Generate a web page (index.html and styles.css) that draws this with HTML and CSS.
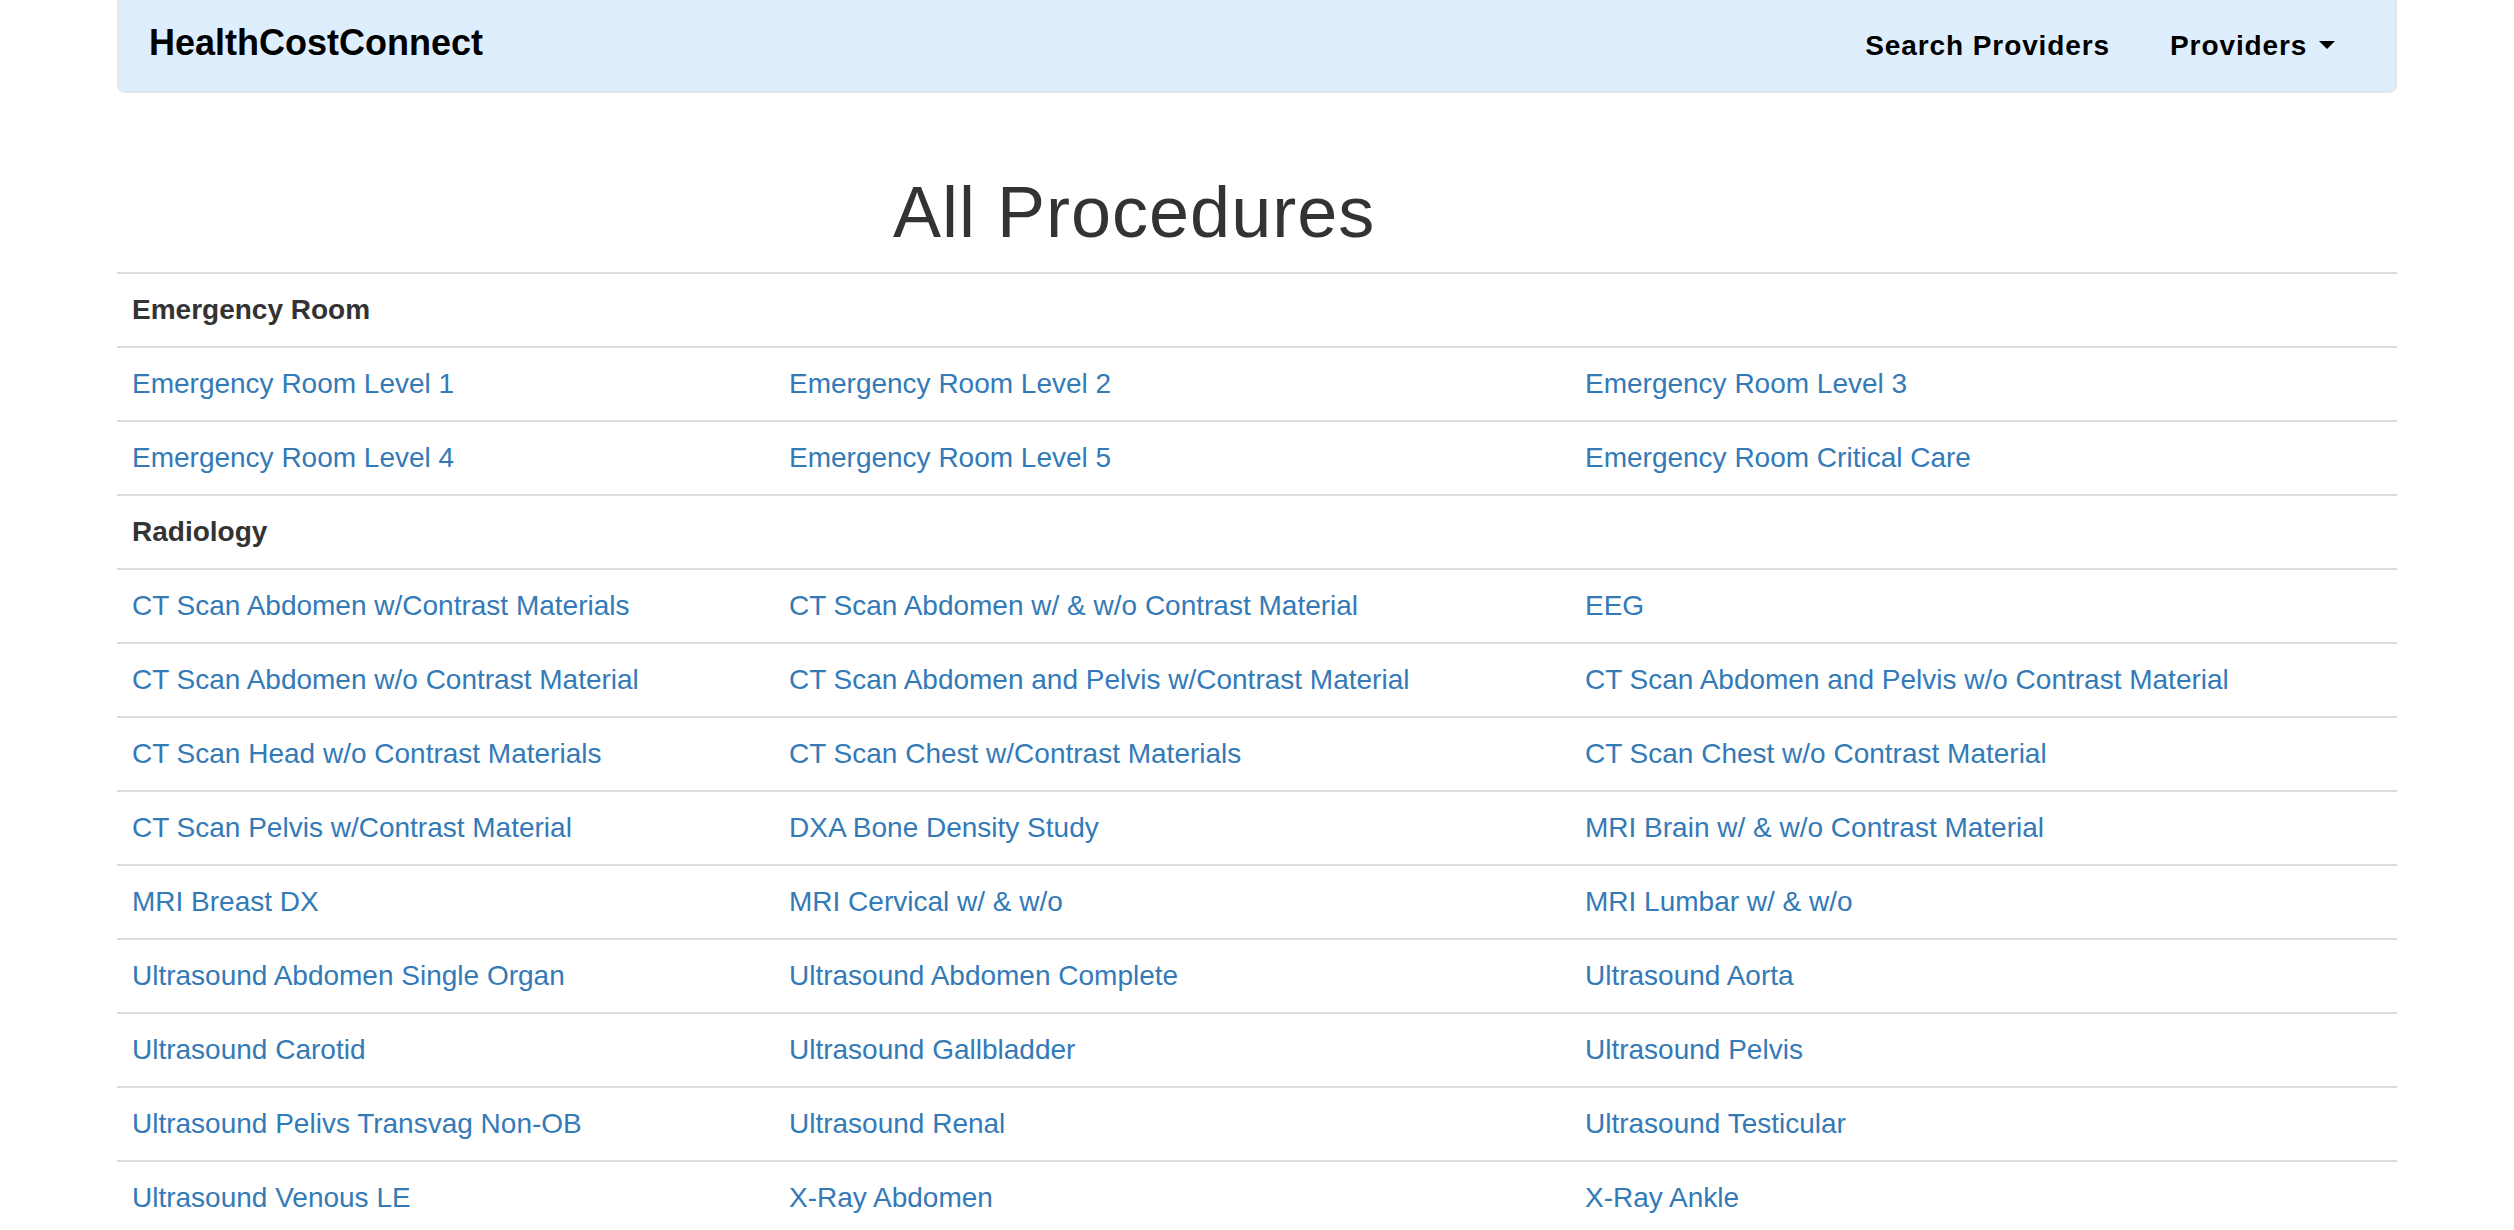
FILE: index.html
```html
<!DOCTYPE html>
<html lang="en">
<head>
<meta charset="utf-8">
<title>HealthCostConnect - All Procedures</title>
<link rel="stylesheet" href="styles.css">
</head>
<body>
<div class="container">
  <nav class="navbar">
    <a class="brand" href="#">HealthCostConnect</a>
    <ul class="nav">
      <li><a href="#">Search Providers</a></li>
      <li><a href="#">Providers <span class="caret"></span></a></li>
    </ul>
  </nav>

  <h1 class="title">All Procedures</h1>

  <table class="procedures">
    <colgroup>
      <col class="c1"><col class="c2"><col class="c3">
    </colgroup>
    <tbody>
      <tr><th colspan="3">Emergency Room</th></tr>
      <tr><td><a href="#">Emergency Room Level 1</a></td><td><a href="#">Emergency Room Level 2</a></td><td><a href="#">Emergency Room Level 3</a></td></tr>
      <tr><td><a href="#">Emergency Room Level 4</a></td><td><a href="#">Emergency Room Level 5</a></td><td><a href="#">Emergency Room Critical Care</a></td></tr>
      <tr><th colspan="3">Radiology</th></tr>
      <tr><td><a href="#">CT Scan Abdomen w/Contrast Materials</a></td><td><a href="#">CT Scan Abdomen w/ &amp; w/o Contrast Material</a></td><td><a href="#">EEG</a></td></tr>
      <tr><td><a href="#">CT Scan Abdomen w/o Contrast Material</a></td><td><a href="#">CT Scan Abdomen and Pelvis w/Contrast Material</a></td><td><a href="#">CT Scan Abdomen and Pelvis w/o Contrast Material</a></td></tr>
      <tr><td><a href="#">CT Scan Head w/o Contrast Materials</a></td><td><a href="#">CT Scan Chest w/Contrast Materials</a></td><td><a href="#">CT Scan Chest w/o Contrast Material</a></td></tr>
      <tr><td><a href="#">CT Scan Pelvis w/Contrast Material</a></td><td><a href="#">DXA Bone Density Study</a></td><td><a href="#">MRI Brain w/ &amp; w/o Contrast Material</a></td></tr>
      <tr><td><a href="#">MRI Breast DX</a></td><td><a href="#">MRI Cervical w/ &amp; w/o</a></td><td><a href="#">MRI Lumbar w/ &amp; w/o</a></td></tr>
      <tr><td><a href="#">Ultrasound Abdomen Single Organ</a></td><td><a href="#">Ultrasound Abdomen Complete</a></td><td><a href="#">Ultrasound Aorta</a></td></tr>
      <tr><td><a href="#">Ultrasound Carotid</a></td><td><a href="#">Ultrasound Gallbladder</a></td><td><a href="#">Ultrasound Pelvis</a></td></tr>
      <tr><td><a href="#">Ultrasound Pelivs Transvag Non-OB</a></td><td><a href="#">Ultrasound Renal</a></td><td><a href="#">Ultrasound Testicular</a></td></tr>
      <tr><td><a href="#">Ultrasound Venous LE</a></td><td><a href="#">X-Ray Abdomen</a></td><td><a href="#">X-Ray Ankle</a></td></tr>
    </tbody>
  </table>
</div>
</body>
</html>
```

FILE: styles.css
```css
* { box-sizing: border-box; }

html, body {
  margin: 0;
  padding: 0;
  background: #fff;
}

body {
  font-family: "Liberation Sans", Arial, Helvetica, sans-serif;
  font-size: 28px;
  line-height: 40px;
  color: #333;
}

.container {
  width: 2280px;
  margin: 0 auto;
}

/* Navbar */
.navbar {
  display: flex;
  align-items: baseline;
  justify-content: space-between;
  height: 93px;
  padding: 23px 0 0 30px;
  background: #deeefd;
  border: 2px solid #e3e7ea;
  border-top: none;
  border-radius: 0 0 8px 8px;
}

.brand {
  font-size: 36px;
  line-height: 40px;
  font-weight: bold;
  color: #000;
  text-decoration: none;
}

.nav {
  display: flex;
  list-style: none;
  margin: 0;
  padding: 0 30px 0 0;
}

.nav a {
  display: block;
  padding: 0 30px;
  font-size: 28px;
  line-height: 40px;
  font-weight: bold;
  letter-spacing: 0.9px;
  color: #000;
  text-decoration: none;
}

.caret {
  display: inline-block;
  width: 0;
  height: 0;
  margin-left: 3px;
  vertical-align: middle;
  position: relative;
  top: -3px;
  border-top: 8px solid #000;
  border-left: 8px solid transparent;
  border-right: 8px solid transparent;
}

/* Heading */
.title {
  margin: 80px 0 20px 776px;
  font-size: 72px;
  line-height: 1.1;
  font-weight: 500;
  letter-spacing: 1px;
  color: #333;
}

/* Table */
.procedures {
  width: 100%;
  border-collapse: collapse;
  table-layout: fixed;
}

.c1 { width: 657px; }
.c2 { width: 796px; }
.c3 { width: 827px; }

.procedures th,
.procedures td {
  padding: 16px 16px 16px 15px;
  line-height: 40px;
  text-align: left;
  vertical-align: top;
  border-top: 2px solid #ddd;
  white-space: nowrap;
}

.procedures th {
  font-weight: bold;
  color: #333;
}

.procedures a {
  color: #337ab7;
  text-decoration: none;
}
```
